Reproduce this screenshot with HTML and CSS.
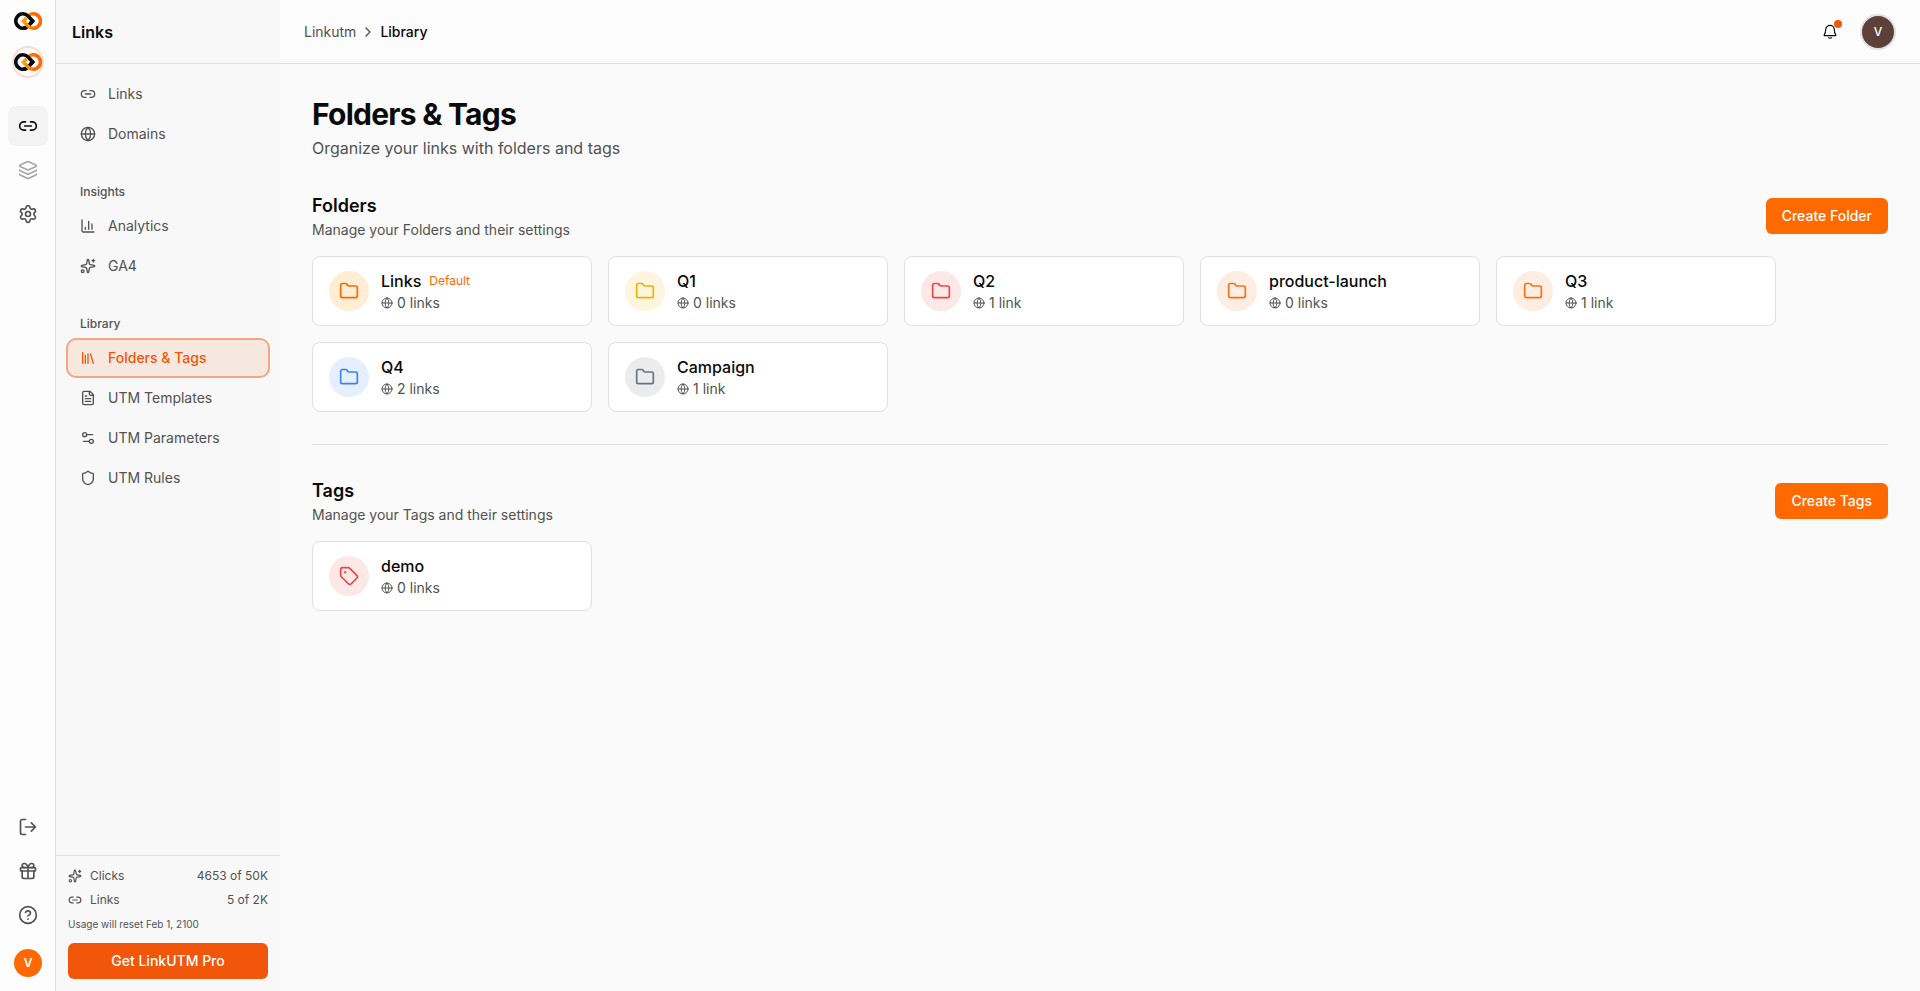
FILE: index.html
```html
<!DOCTYPE html>
<html lang="en">
<head>
<meta charset="utf-8">
<title>Folders &amp; Tags</title>
<link rel="stylesheet" href="styles.css">
</head>
<body>
<svg class="sprite" aria-hidden="true">
  <defs>
    <linearGradient id="flame" gradientUnits="userSpaceOnUse" x1="8" y1="0" x2="21" y2="0"><stop offset="0" stop-color="#ffa514"/><stop offset="1" stop-color="#ff6a00"/></linearGradient>
  </defs>
  <symbol id="logo" viewBox="0 0 28 18">
    <path d="M9 16.200c2 0 3.600-.6 5-2l4.600-5.200" fill="none" stroke="#0a0a0a" stroke-width="3.600"/>
    <path d="M14.500 3.600A7.200 7.200 0 1 1 19 16.200c-2 0-3.600-.7-5-2.100L9.400 9.200l3-3.200" fill="none" stroke="url(#flame)" stroke-width="3.600"/>
    <path d="M12.300 15.400A7.200 7.200 0 1 1 9 1.800c2 0 3.600.7 5 2.100L18.800 9l-2.300 2.500" fill="none" stroke="#0a0a0a" stroke-width="3.600"/>
  </symbol>
  <symbol id="link" viewBox="0 0 24 24"><path d="M9 17H7A5 5 0 0 1 7 7h2M15 7h2a5 5 0 1 1 0 10h-2M8 12h8"/></symbol>
  <symbol id="globe" viewBox="0 0 24 24"><circle cx="12" cy="12" r="10"/><path d="M12 2a14.500 14.500 0 0 0 0 20 14.500 14.500 0 0 0 0-20M2 12h20"/></symbol>
  <symbol id="layers" viewBox="0 0 24 24"><path d="M12.830 2.180a2 2 0 0 0-1.660 0L2.600 6.080a1 1 0 0 0 0 1.830l8.580 3.910a2 2 0 0 0 1.660 0l8.580-3.900a1 1 0 0 0 0-1.830z"/><path d="M2 12a1 1 0 0 0 .58.910l8.600 3.910a2 2 0 0 0 1.650 0l8.580-3.900A1 1 0 0 0 22 12"/><path d="M2 17a1 1 0 0 0 .58.910l8.600 3.910a2 2 0 0 0 1.650 0l8.580-3.900A1 1 0 0 0 22 17"/></symbol>
  <symbol id="settings" viewBox="0 0 24 24"><path d="M9.671 4.136a2.340 2.340 0 0 1 4.659 0 2.340 2.340 0 0 0 3.319 1.915 2.340 2.340 0 0 1 2.330 4.033 2.340 2.340 0 0 0 0 3.831 2.340 2.340 0 0 1-2.330 4.033 2.340 2.340 0 0 0-3.319 1.915 2.340 2.340 0 0 1-4.659 0 2.340 2.340 0 0 0-3.320-1.915 2.340 2.340 0 0 1-2.330-4.033 2.340 2.340 0 0 0 0-3.831A2.340 2.340 0 0 1 6.350 6.051a2.340 2.340 0 0 0 3.319-1.915"/><circle cx="12" cy="12" r="3"/></symbol>
  <symbol id="chart" viewBox="0 0 24 24"><path d="M3 3v16a2 2 0 0 0 2 2h16M18 17V9M13 17V5M8 17v-3"/></symbol>
  <symbol id="sparkles" viewBox="0 0 24 24"><path d="M11.017 2.814a1 1 0 0 1 1.966 0l1.051 5.558a2 2 0 0 0 1.594 1.594l5.558 1.051a1 1 0 0 1 0 1.966l-5.558 1.051a2 2 0 0 0-1.594 1.594l-1.051 5.558a1 1 0 0 1-1.966 0l-1.051-5.558a2 2 0 0 0-1.594-1.594l-5.558-1.051a1 1 0 0 1 0-1.966l5.558-1.051a2 2 0 0 0 1.594-1.594zM20 2v4M22 4h-4"/><circle cx="4" cy="20" r="2"/></symbol>
  <symbol id="library" viewBox="0 0 24 24"><path d="m16 6 4 14M12 6v14M8 8v12M4 4v16"/></symbol>
  <symbol id="file" viewBox="0 0 24 24"><path d="M15 2H6a2 2 0 0 0-2 2v16a2 2 0 0 0 2 2h12a2 2 0 0 0 2-2V7ZM14 2v4a2 2 0 0 0 2 2h4M10 9H8M16 13H8M16 17H8"/></symbol>
  <symbol id="sliders" viewBox="0 0 24 24"><path d="M14 17H5M19 7h-9"/><circle cx="17" cy="17" r="3"/><circle cx="7" cy="7" r="3"/></symbol>
  <symbol id="shield" viewBox="0 0 24 24"><path d="M20 13c0 5-3.500 7.500-7.660 8.950a1 1 0 0 1-.67-.01C7.500 20.500 4 18 4 13V6a1 1 0 0 1 1-1c2 0 4.500-1.200 6.240-2.720a1.170 1.170 0 0 1 1.520 0C14.510 3.810 17 5 19 5a1 1 0 0 1 1 1z"/></symbol>
  <symbol id="logout" viewBox="0 0 24 24"><path d="m16 17 5-5-5-5M21 12H9M9 21H5a2 2 0 0 1-2-2V5a2 2 0 0 1 2-2h4"/></symbol>
  <symbol id="gift" viewBox="0 0 24 24"><rect x="3" y="8" width="18" height="4" rx="1"/><path d="M12 8v13M19 12v7a2 2 0 0 1-2 2H7a2 2 0 0 1-2-2v-7M7.500 8a2.500 2.500 0 0 1 0-5A4.800 8 0 0 1 12 8a4.800 8 0 0 1 4.500-5 2.500 2.500 0 0 1 0 5"/></symbol>
  <symbol id="help" viewBox="0 0 24 24"><circle cx="12" cy="12" r="10"/><path d="M9.090 9a3 3 0 0 1 5.830 1c0 2-3 3-3 3M12 17h.01"/></symbol>
  <symbol id="chevron" viewBox="0 0 24 24"><path d="m9 18 6-6-6-6"/></symbol>
  <symbol id="bell" viewBox="0 0 16 16"><path d="M3.700 5.600a4.300 4.300 0 0 1 8.600 0c0 3.200.6 4.200 1.500 5.400.2.300 0 .6-.3.600H2.500c-.3 0-.5-.3-.3-.6.900-1.200 1.500-2.200 1.500-5.400zM6.500 13.800c.9.500 2.100.5 3 0"/></symbol>
  <symbol id="folder" viewBox="0 0 24 24"><path d="M20 20a2 2 0 0 0 2-2V8a2 2 0 0 0-2-2h-7.900a2 2 0 0 1-1.690-.9L9.600 3.900A2 2 0 0 0 7.930 3H4a2 2 0 0 0-2 2v13a2 2 0 0 0 2 2Z"/></symbol>
  <symbol id="tag" viewBox="0 0 24 24"><path d="M12.586 2.586A2 2 0 0 0 11.172 2H4a2 2 0 0 0-2 2v7.172a2 2 0 0 0 .586 1.414l8.704 8.704a2.426 2.426 0 0 0 3.420 0l6.580-6.580a2.426 2.426 0 0 0 0-3.420z"/><circle cx="7.500" cy="7.500" r=".5" fill="currentColor"/></symbol>
</svg>

<div class="app">
  <aside class="rail">
    <svg class="logo"><use href="#logo"/></svg>
    <div class="workspace"><svg class="logo"><use href="#logo"/></svg></div>
    <nav class="rail-nav">
      <a class="rail-item is-active"><svg class="icon"><use href="#link"/></svg></a>
      <a class="rail-item is-muted"><svg class="icon"><use href="#layers"/></svg></a>
      <a class="rail-item"><svg class="icon"><use href="#settings"/></svg></a>
    </nav>
    <nav class="rail-nav rail-bottom">
      <a class="rail-item"><svg class="icon"><use href="#logout"/></svg></a>
      <a class="rail-item"><svg class="icon"><use href="#gift"/></svg></a>
      <a class="rail-item"><svg class="icon"><use href="#help"/></svg></a>
    </nav>
    <div class="rail-avatar">V</div>
  </aside>

  <aside class="sidebar">
    <header class="sidebar-head">Links</header>
    <nav class="menu">
      <a class="menu-item"><svg class="icon"><use href="#link"/></svg>Links</a>
      <a class="menu-item"><svg class="icon"><use href="#globe"/></svg>Domains</a>
      <div class="menu-label">Insights</div>
      <a class="menu-item"><svg class="icon"><use href="#chart"/></svg>Analytics</a>
      <a class="menu-item"><svg class="icon"><use href="#sparkles"/></svg>GA4</a>
      <div class="menu-label">Library</div>
      <a class="menu-item is-active"><svg class="icon"><use href="#library"/></svg>Folders &amp; Tags</a>
      <a class="menu-item"><svg class="icon"><use href="#file"/></svg>UTM Templates</a>
      <a class="menu-item"><svg class="icon"><use href="#sliders"/></svg>UTM Parameters</a>
      <a class="menu-item"><svg class="icon"><use href="#shield"/></svg>UTM Rules</a>
    </nav>
    <footer class="usage">
      <div class="usage-row"><svg class="icon"><use href="#sparkles"/></svg>Clicks<span class="usage-value">4653 of 50K</span></div>
      <div class="usage-row"><svg class="icon"><use href="#link"/></svg>Links<span class="usage-value">5 of 2K</span></div>
      <p class="usage-note">Usage will reset Feb 1, 2100</p>
      <button class="button button-pro">Get LinkUTM Pro</button>
    </footer>
  </aside>

  <div class="page">
    <header class="topbar">
      <nav class="crumbs"><span>Linkutm</span><svg class="icon"><use href="#chevron"/></svg><span class="crumb-current">Library</span></nav>
      <div class="topbar-tools">
        <button class="bell"><svg class="icon"><use href="#bell"/></svg><span class="bell-dot"></span></button>
        <div class="avatar">V</div>
      </div>
    </header>
    <main class="content">
      <h1 class="title">Folders &amp; Tags</h1>
      <p class="subtitle">Organize your links with folders and tags</p>

      <section class="section">
        <div class="section-head">
          <div><h2 class="section-title">Folders</h2><p class="section-text">Manage your Folders and their settings</p></div>
          <button class="button">Create Folder</button>
        </div>
        <div class="cards">
          <article class="card"><div class="badge badge-default"><svg class="icon"><use href="#folder"/></svg></div><div><div class="card-name">Links<span class="card-tag">Default</span></div><div class="card-meta"><svg class="icon"><use href="#globe"/></svg>0 links</div></div></article>
          <article class="card"><div class="badge badge-yellow"><svg class="icon"><use href="#folder"/></svg></div><div><div class="card-name">Q1</div><div class="card-meta"><svg class="icon"><use href="#globe"/></svg>0 links</div></div></article>
          <article class="card"><div class="badge badge-red"><svg class="icon"><use href="#folder"/></svg></div><div><div class="card-name">Q2</div><div class="card-meta"><svg class="icon"><use href="#globe"/></svg>1 link</div></div></article>
          <article class="card"><div class="badge badge-orange"><svg class="icon"><use href="#folder"/></svg></div><div><div class="card-name">product-launch</div><div class="card-meta"><svg class="icon"><use href="#globe"/></svg>0 links</div></div></article>
          <article class="card"><div class="badge badge-orange"><svg class="icon"><use href="#folder"/></svg></div><div><div class="card-name">Q3</div><div class="card-meta"><svg class="icon"><use href="#globe"/></svg>1 link</div></div></article>
          <article class="card"><div class="badge badge-blue"><svg class="icon"><use href="#folder"/></svg></div><div><div class="card-name">Q4</div><div class="card-meta"><svg class="icon"><use href="#globe"/></svg>2 links</div></div></article>
          <article class="card"><div class="badge badge-gray"><svg class="icon"><use href="#folder"/></svg></div><div><div class="card-name">Campaign</div><div class="card-meta"><svg class="icon"><use href="#globe"/></svg>1 link</div></div></article>
        </div>
      </section>

      <section class="section section-ruled">
        <div class="section-head">
          <div><h2 class="section-title">Tags</h2><p class="section-text">Manage your Tags and their settings</p></div>
          <button class="button">Create Tags</button>
        </div>
        <div class="cards">
          <article class="card"><div class="badge badge-red"><svg class="icon"><use href="#tag"/></svg></div><div><div class="card-name">demo</div><div class="card-meta"><svg class="icon"><use href="#globe"/></svg>0 links</div></div></article>
        </div>
      </section>
    </main>
  </div>
</div>
</body>
</html>
```

FILE: styles.css
```css
* { box-sizing: border-box; }

body {
  margin: 0;
  font: 14px/20px Inter, "Liberation Sans", sans-serif;
  color: #0a0a0a;
  background: #fafafa;
}

h1, h2, p { margin: 0; }

.sprite { position: absolute; width: 0; height: 0; }

.icon {
  width: 16px;
  height: 16px;
  flex: none;
  display: block;
  fill: none;
  stroke: currentColor;
  stroke-width: 2;
  stroke-linecap: round;
  stroke-linejoin: round;
}

.app { display: flex; height: 991px; overflow: hidden; }

/* Icon rail */
.rail {
  width: 56px;
  flex: none;
  display: flex;
  flex-direction: column;
  align-items: center;
  padding: 12px 0 14px;
  background: #fdfdfd;
  border-right: 1px solid #e0e0e0;
}
.logo { width: 28px; height: 18px; display: block; flex: none; }
.rail > .logo { margin-left: 1px; }
.workspace {
  width: 32px;
  height: 32px;
  margin: 16px 0 28px 1px;
  display: flex;
  align-items: center;
  justify-content: center;
  border: 2px solid #fcdccf;
  border-radius: 50%;
}
.workspace .logo { margin: 0 -2px; }
.rail-nav { display: flex; flex-direction: column; gap: 4px; margin-left: 1px; }
.rail-bottom { margin-top: auto; }
.rail-item {
  width: 40px;
  height: 40px;
  display: flex;
  align-items: center;
  justify-content: center;
  border-radius: 8px;
  color: #525252;
}
.rail-item .icon { width: 20px; height: 20px; }
.rail-item.is-active { background: #f3f3f3; color: #0a0a0a; }
.rail-item.is-muted { color: #a8a8a8; }
.rail-avatar {
  width: 28px;
  height: 28px;
  margin: 14px 0 0 1px;
  border-radius: 50%;
  background: #ff6900;
  color: #fff;
  font-size: 12px;
  font-weight: 600;
  line-height: 28px;
  text-align: center;
}

/* Sidebar */
.sidebar {
  width: 224px;
  flex: none;
  display: flex;
  flex-direction: column;
  background: #f8f8f8;
}
.sidebar-head {
  height: 64px;
  padding-left: 16px;
  border-bottom: 1px solid #e0e0e0;
  font-size: 16px;
  font-weight: 600;
  line-height: 64px;
}
.menu { flex: 1; padding: 10px 10px 0; }
.menu-item {
  height: 40px;
  display: flex;
  align-items: center;
  gap: 12px;
  padding-left: 14px;
  border-radius: 10px;
  color: #525252;
}
.menu-item.is-active {
  background: #f7e8df;
  color: #f1560b;
  font-weight: 500;
  box-shadow: inset 0 0 0 2px #f8a581, 0 0 0 1px #fff;
}
.menu-label {
  padding: 30px 14px 6px;
  font-size: 12px;
  font-weight: 500;
  line-height: 16px;
  color: #525252;
}
.usage {
  padding: 12px;
  border-top: 1px solid #e0e0e0;
  font-size: 12px;
  line-height: 16px;
  color: #525252;
}
.usage-row { display: flex; align-items: center; gap: 8px; margin-bottom: 8px; }
.usage-row .icon { width: 14px; height: 14px; }
.usage-value { margin-left: auto; }
.usage-note { padding-top: 1px; font-size: 10px; line-height: 15px; }

.button {
  height: 36px;
  padding: 0 16px;
  border: 0;
  border-radius: 6px;
  background: #ff6900;
  color: #fff;
  font: 500 14px/20px Inter, "Liberation Sans", sans-serif;
}
.button-pro { display: block; width: 100%; margin-top: 11px; background: #f1560b; }

/* Top bar */
.page { flex: 1; min-width: 0; }
.topbar {
  height: 64px;
  display: flex;
  align-items: center;
  justify-content: space-between;
  padding: 0 24px;
  background: #fcfcfc;
  border-bottom: 1px solid #e0e0e0;
}
.crumbs { display: flex; align-items: center; gap: 4px; color: #525252; }
.crumb-current { color: #0a0a0a; font-weight: 500; }
.topbar-tools { display: flex; align-items: center; gap: 22px; }
.bell { position: relative; padding: 0; border: 0; background: none; color: #0a0a0a; }
.bell .icon { stroke-width: 1.2; }
.bell-dot {
  position: absolute;
  top: -4px;
  right: -4px;
  width: 8px;
  height: 8px;
  border-radius: 50%;
  background: #f1560b;
}
.avatar {
  width: 36px;
  height: 36px;
  border: 2px solid #e2e2e2;
  border-radius: 50%;
  background: #5d4037;
  color: #fff;
  font-size: 12px;
  font-weight: 500;
  line-height: 32px;
  text-align: center;
}

/* Content */
.content { padding: 32px; }
.title { font-size: 30px; font-weight: 700; line-height: 36px; letter-spacing: -0.75px; }
.subtitle { margin-top: 4px; font-size: 16px; line-height: 24px; color: #525252; }
.section { margin-top: 32px; }
.section-ruled { padding-top: 32px; border-top: 1px solid #e0e0e0; }
.section-head { display: flex; align-items: center; justify-content: space-between; margin-bottom: 16px; }
.section-title { font-size: 18px; font-weight: 600; line-height: 28px; }
.section-text { color: #525252; }
.cards { display: flex; flex-wrap: wrap; gap: 16px; }
.card {
  width: 280px;
  height: 70px;
  display: flex;
  align-items: center;
  gap: 12px;
  padding: 0 16px;
  border: 1px solid #e0e0e0;
  border-radius: 8px;
  background: #fff;
}
.card-name { display: flex; align-items: center; gap: 8px; font-size: 16px; font-weight: 500; line-height: 24px; }
.card-tag { font-size: 12px; line-height: 16px; font-weight: 400; color: #ff6900; }
.card-meta { display: flex; align-items: center; gap: 4px; color: #525252; }
.card-meta .icon { width: 12px; height: 12px; }
.badge {
  width: 40px;
  height: 40px;
  flex: none;
  display: flex;
  align-items: center;
  justify-content: center;
  border-radius: 50%;
}
.badge .icon { width: 20px; height: 20px; stroke-width: 2; }
.badge-default { background: #ffedd4; color: #ff6900; }
.badge-yellow { background: #fdf5de; color: #eab308; }
.badge-red { background: #fde8e8; color: #ef4444; }
.badge-orange { background: #feede2; color: #f97316; }
.badge-blue { background: #e6effe; color: #3b82f6; }
.badge-gray { background: #ebecee; color: #6b7280; }
```
